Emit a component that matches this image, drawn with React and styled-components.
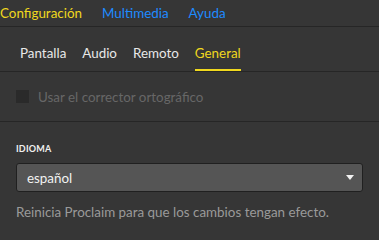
import React from "react";
import styled, { createGlobalStyle } from "styled-components";

const Global = createGlobalStyle`
  html, body { margin: 0; padding: 0; background: #363636; }
  body { font-family: Lato, "Open Sans", sans-serif; }
`;

const Page = styled.div`
  width: 379px;
  height: 240px;
  background: #363636;
  overflow: hidden;
  font-family: Lato, sans-serif;
  font-size: 13.4px;
`;

const MenuBar = styled.nav`
  display: flex;
  gap: 20px;
  height: 26px;
  align-items: center;
  border-bottom: 1px solid #262626;
`;

const MenuItem = styled.span`
  color: ${(p) => (p.$active ? "#f0d81e" : "#1e8bff")};
  font-size: 13.4px;
  line-height: 16px;
  padding-bottom: 1px;
`;

const Tabs = styled.div`
  display: flex;
  gap: 16px;
  padding-left: 20px;
  height: 44px;
  align-items: flex-end;
  border-bottom: 1px solid #262626;
`;

const Tab = styled.div`
  color: ${(p) => (p.$active ? "#f0d81e" : "#e8e8e8")};
  font-size: 13.4px;
  line-height: 16px;
  padding-bottom: 8px;
  border-bottom: 2px solid ${(p) => (p.$active ? "#f0d81e" : "transparent")};
`;

const CheckRow = styled.label`
  display: flex;
  align-items: center;
  gap: 9px;
  padding: 0 16px;
  height: 49px;
  border-bottom: 1px solid #262626;
`;

const Box = styled.span`
  width: 13px;
  height: 13px;
  background: #2a2a2a;
  display: inline-block;
`;

const CheckText = styled.span`
  color: #676767;
  font-size: 13.4px;
`;

const Section = styled.div`
  padding: 22px 16px 0;
`;

const Label = styled.div`
  color: #f0f0f0;
  font-size: 9px;
  font-weight: 700;
  letter-spacing: 0.2px;
  line-height: 10px;
`;

const Select = styled.div`
  margin-top: 9px;
  height: 27px;
  background: #555555;
  border: 1px solid #202020;
  border-radius: 3px;
  display: flex;
  align-items: center;
  justify-content: space-between;
  padding: 0 8px 0 10px;
  color: #f2f2f2;
  font-size: 13.4px;
`;

const Arrow = styled.svg`
  width: 8px;
  height: 5px;
`;

const Help = styled.div`
  margin-top: 12px;
  color: #9a9a9a;
  font-size: 13.4px;
`;

export default function App() {
  return (
    <Page>
      <Global />
      <MenuBar>
        <MenuItem $active>Configuración</MenuItem>
        <MenuItem>Multimedia</MenuItem>
        <MenuItem>Ayuda</MenuItem>
      </MenuBar>
      <Tabs>
        <Tab>Pantalla</Tab>
        <Tab>Audio</Tab>
        <Tab>Remoto</Tab>
        <Tab $active>General</Tab>
      </Tabs>
      <CheckRow>
        <Box />
        <CheckText>Usar el corrector ortográfico</CheckText>
      </CheckRow>
      <Section>
        <Label>IDIOMA</Label>
        <Select>
          <span>español</span>
          <Arrow viewBox="0 0 8 5">
            <path d="M0 0H8L4 5Z" fill="#f2f2f2" />
          </Arrow>
        </Select>
        <Help>Reinicia Proclaim para que los cambios tengan efecto.</Help>
      </Section>
    </Page>
  );
}
